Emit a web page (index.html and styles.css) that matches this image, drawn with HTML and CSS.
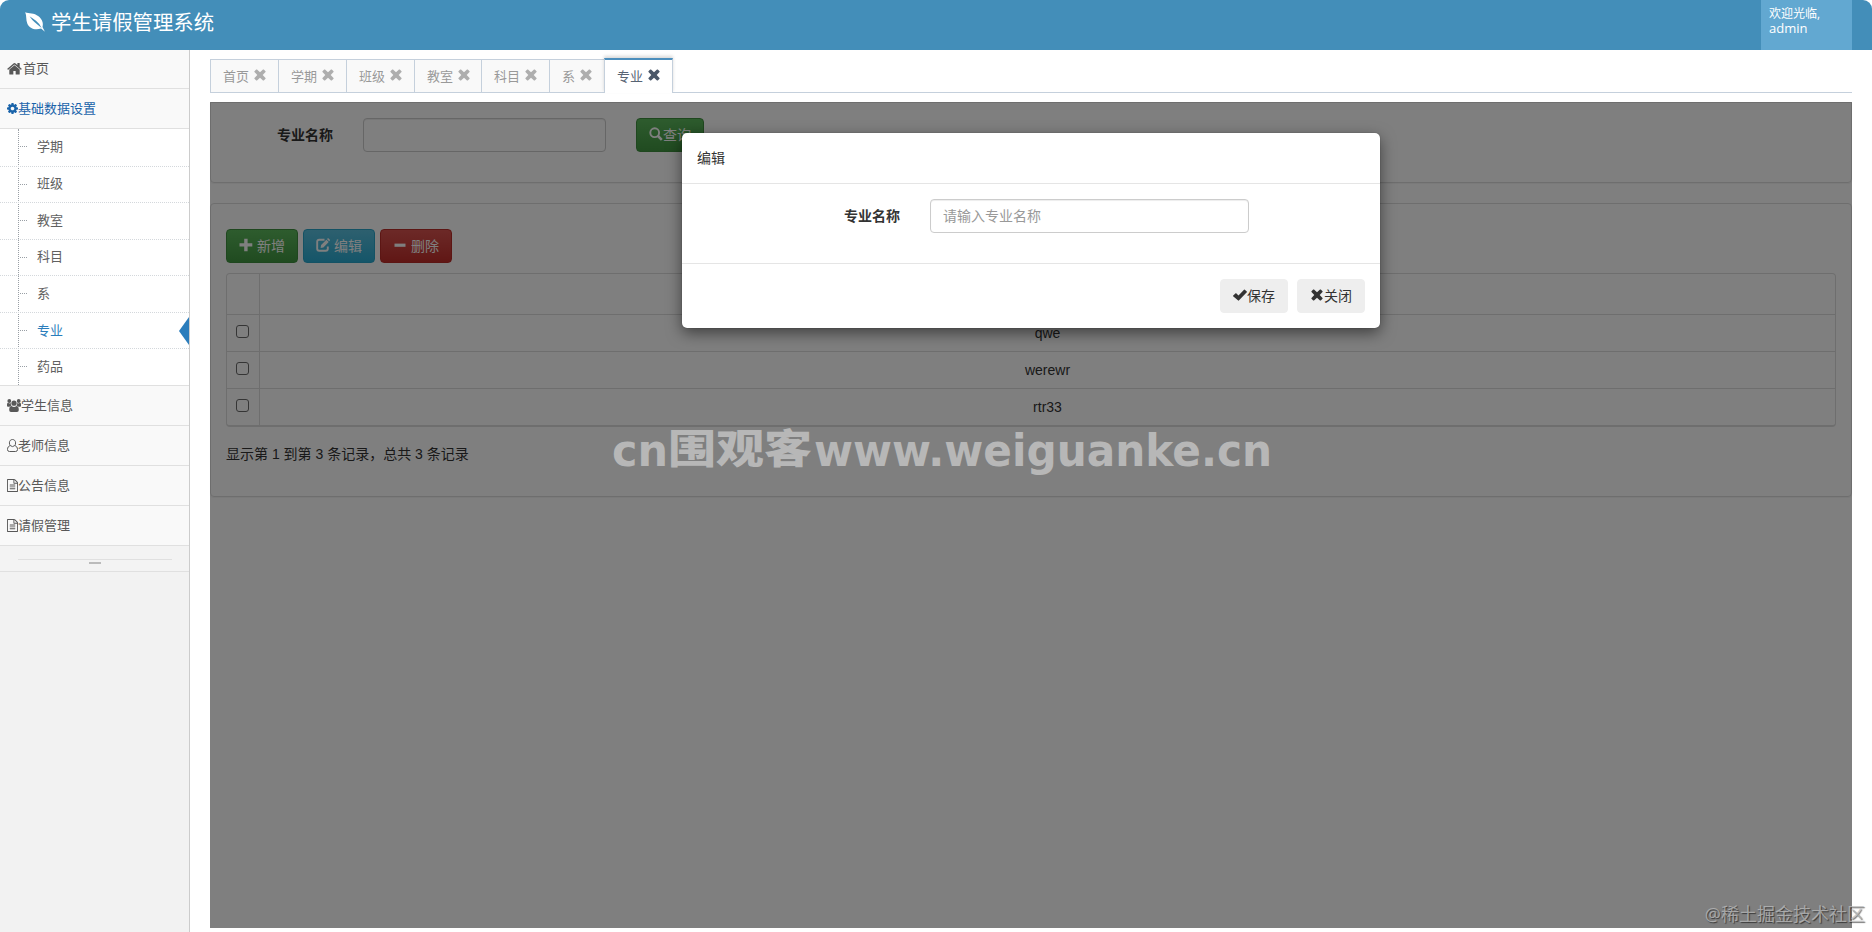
FILE: index.html
```html
<!DOCTYPE html>
<html lang="zh-CN">
<head>
    <meta charset="utf-8">
    <title>学生请假管理系统</title>
    <link rel="stylesheet" href="styles.css">
</head>
<body>
    <!-- icons -->
    <svg class="sprite">
        <symbol id="i-home" viewBox="64 192 1664 1344"><path d="M1472 992v480q0 26-19 45t-45 19h-384v-384h-256v384h-384q-26 0-45-19t-19-45v-480q0-1 .5-3t.5-3l575-474 575 474q1 2 1 6zm223-69l-62 74q-8 9-21 11h-3q-13 0-21-7l-692-577-692 577q-12 8-24 7-13-2-21-11l-62-74q-8-10-7-23.5t11-21.5l719-599q32-26 76-26t76 26l244 204v-195q0-14 9-23t23-9h192q14 0 23 9t9 23v408l219 182q10 8 11 21.5t-7 23.5z"/></symbol>
        <symbol id="i-cog" viewBox="128 128 1536 1536"><path d="M1152 896q0-106-75-181t-181-75-181 75-75 181 75 181 181 75 181-75 75-181zm512-109v222q0 12-8 23t-20 13l-185 28q-19 54-39 91 35 50 107 138 10 12 10 25t-9 23q-27 37-99 108t-94 71q-12 0-26-9l-138-108q-44 23-91 38-16 136-29 186-7 28-36 28h-222q-14 0-24.5-8.5t-11.5-21.5l-28-184q-49-16-90-37l-141 107q-10 9-25 9-14 0-25-11-126-114-165-168-7-10-7-23 0-12 8-23 15-21 51-66.5t54-70.5q-27-50-41-99l-183-27q-13-2-21-12.5t-8-23.5v-222q0-12 8-23t19-13l186-28q14-46 39-92-40-57-107-138-10-12-10-24 0-10 9-23 26-36 98.5-107.5t94.5-71.5q13 0 26 10l138 107q44-23 91-38 16-136 29-186 7-28 36-28h222q14 0 24.5 8.5t11.5 21.5l28 184q49 16 90 37l142-107q9-9 24-9 13 0 25 10 129 119 165 170 7 8 7 22 0 12-8 23-15 21-51 66.5t-54 70.5q26 50 41 98l183 28q13 2 21 12.5t8 23.5z"/></symbol>
        <symbol id="i-file" viewBox="128 0 1536 1792"><path d="M1596 380q28 28 48 76t20 88v1152q0 40-28 68t-68 28h-1344q-40 0-68-28t-28-68v-1600q0-40 28-68t68-28h896q40 0 88 20t76 48zm-444-244v376h376q-10-29-22-41l-313-313q-12-12-41-22zm384 1528v-1024h-416q-40 0-68-28t-28-68v-416h-768v1536h1280zm-1024-864q0-14 9-23t23-9h704q14 0 23 9t9 23v64q0 14-9 23t-23 9h-704q-14 0-23-9t-9-23v-64zm736 224q14 0 23 9t9 23v64q0 14-9 23t-23 9h-704q-14 0-23-9t-9-23v-64q0-14 9-23t23-9h704zm0 256q14 0 23 9t9 23v64q0 14-9 23t-23 9h-704q-14 0-23-9t-9-23v-64q0-14 9-23t23-9h704z"/></symbol>
        <symbol id="i-group" viewBox="0 0 14 13"><circle cx="2.3" cy="2" r="1.9"/><circle cx="11.7" cy="2" r="1.9"/><path d="M0 7V5.4q0-1.6 1-1.6l1.5.6 1.3-.3q-.2 1.6.7 2.6-1.2 0-2 1H1Q0 7.700 0 7zM14 7V5.400q0-1.600-1-1.600l-1.500.600-1.300-.300q.2 1.600-.700 2.600 1.200 0 2 1H13q1 0 1-.700z"/><circle cx="7" cy="4.200" r="2.600"/><path d="M4.500 7.100q2.500 1.800 5 0 2.300 0 2.300 3.900 0 2-1.800 2H4q-1.800 0-1.800-2 0-3.900 2.300-3.900z"/></symbol>
        <symbol id="i-user" viewBox="0 0 11 13"><path d="M3.300 6.600q-.900-1-.900-2.700C2.400 1.800 3.700.5 5.500.5s3.100 1.300 3.100 3.400q0 1.700-.900 2.700M3.300 6.600C1.500 7 .5 8.500.5 10.500q0 2 1.900 2h6.200q1.900 0 1.900-2c0-2-1-3.500-2.800-3.900Q5.500 8.600 3.300 6.600z" fill="none" stroke="currentColor"/></symbol>
        <symbol id="i-leaf" viewBox="0 0 20 20"><path d="M.2.2C4 1.400 9 .8 13.500 4.200c4.200 3.300 5 7.600 4 10.800l2.400 4.800-3.800-3.200C10 18.200 4.500 16.800 2.300 11.500.8 7.700 1.800 4 .2.200z"/><path d="M4.500 4.200Q7 8 10 10.500T16.600 16Q14.500 11.500 11 8.800T4.500 4.200z" fill="#438eb9"/></symbol>
        <symbol id="i-remove" viewBox="0 0 12 12"><path d="M3 .6l3 2.700L9 .6q.4-.4.8 0l1.700 1.700q.4.4 0 .8L8.700 6l2.800 2.900q.4.400 0 .8l-1.700 1.700q-.4.400-.8 0L6 8.700l-3 2.700q-.4.400-.8 0L.5 9.700q-.4-.4 0-.8L3.300 6 .5 3.100q-.4-.4 0-.8L2.200.6q.4-.4.800 0z"/></symbol>
        <symbol id="i-ok" viewBox="0 0 14 12"><path d="M0 6.800l2.600-2.500q.3-.3.600 0l2.300 2.300L11 .7q.4-.4.800 0l2 1.800q.3.400 0 .7l-8 8.400q-.3.300-.6 0L.1 7.300q-.3-.3-.1-.5z"/></symbol>
        <symbol id="i-search" viewBox="0 0 14 14"><circle cx="5.700" cy="5.700" r="4.400" fill="none" stroke="currentColor" stroke-width="1.900"/><path d="M9 9l3.800 3.800" stroke="currentColor" stroke-width="2.500"/></symbol>
        <symbol id="i-plus" viewBox="0 0 14 14"><path d="M5.200.8h3.400v4.500h4.700v3.300H8.600v4.600H5.200V8.600H.5V5.300h4.700z"/></symbol>
        <symbol id="i-edit" viewBox="0 0 14 14"><path d="M8.500 1.700H3.200Q1.200 1.700 1.200 3.700v7q0 2 2 2h6.600q2 0 2-2V8.500" fill="none" stroke="currentColor" stroke-width="1.900"/><path d="M4.600 10l.5-3L10.400 1.700l2.300 2.300-5.300 5.400zM11 1.100l.8-.8q.3-.3.600 0l1.500 1.500q.3.300 0 .6l-.8.800z"/></symbol>
        <symbol id="i-minus" viewBox="0 0 14 14"><path d="M1.500 5.600h11v3.200h-11z"/></symbol>
    </svg>

    <div class="navbar">
        <div class="brand"><svg><use href="#i-leaf"/></svg><span>学生请假管理系统</span></div>
        <div class="user-info">欢迎光临,<br><span>admin</span></div>
    </div>

    <div class="main">
        <div class="sidebar">
            <ul class="nav-list">
                <li><a><svg class="home"><use href="#i-home"/></svg>首页</a></li>
                <li class="open"><a><svg class="cog"><use href="#i-cog"/></svg>基础数据设置</a>
                    <ul class="submenu">
                        <li>学期</li>
                        <li>班级</li>
                        <li>教室</li>
                        <li>科目</li>
                        <li>系</li>
                        <li class="active">专业</li>
                        <li>药品</li>
                    </ul>
                </li>
                <li><a><svg class="group"><use href="#i-group"/></svg>学生信息</a></li>
                <li><a><svg class="user"><use href="#i-user"/></svg>老师信息</a></li>
                <li><a><svg class="file"><use href="#i-file"/></svg>公告信息</a></li>
                <li><a><svg class="file"><use href="#i-file"/></svg>请假管理</a></li>
            </ul>
            <div class="sidebar-toggle"><i></i></div>
        </div>

        <div class="content">
            <div class="tabs">
                <div class="tab">首页<svg><use href="#i-remove"/></svg></div>
                <div class="tab">学期<svg><use href="#i-remove"/></svg></div>
                <div class="tab">班级<svg><use href="#i-remove"/></svg></div>
                <div class="tab">教室<svg><use href="#i-remove"/></svg></div>
                <div class="tab">科目<svg><use href="#i-remove"/></svg></div>
                <div class="tab">系<svg><use href="#i-remove"/></svg></div>
                <div class="tab active">专业<svg><use href="#i-remove"/></svg></div>
            </div>

            <div class="frame">
                <div class="panel search">
                    <label>专业名称</label>
                    <input type="text" class="form-control">
                    <button class="btn btn-success"><svg><use href="#i-search"/></svg>查询</button>
                </div>

                <div class="panel list">
                    <div class="toolbar">
                        <button class="btn btn-success"><svg><use href="#i-plus"/></svg> 新增</button>
                        <button class="btn btn-info"><svg><use href="#i-edit"/></svg> 编辑</button>
                        <button class="btn btn-danger"><svg><use href="#i-minus"/></svg> 删除</button>
                    </div>
                    <div class="table">
                        <div class="row head"><div class="check"></div><div class="cell"></div></div>
                        <div class="row"><div class="check"><i></i></div><div class="cell">qwe</div></div>
                        <div class="row"><div class="check"><i></i></div><div class="cell">werewr</div></div>
                        <div class="row"><div class="check"><i></i></div><div class="cell">rtr33</div></div>
                    </div>
                    <div class="page-info">显示第 1 到第 3 条记录，总共 3 条记录</div>
                </div>

                <div class="backdrop">
                    <div class="modal">
                        <div class="modal-header">编辑</div>
                        <div class="modal-body">
                            <label>专业名称</label>
                            <input type="text" class="form-control" placeholder="请输入专业名称">
                        </div>
                        <div class="modal-footer">
                            <button class="btn"><svg class="ok"><use href="#i-ok"/></svg>保存</button>
                            <button class="btn"><svg class="remove"><use href="#i-remove"/></svg>关闭</button>
                        </div>
                    </div>
                </div>
            </div>
        </div>
    </div>

    <svg class="site-mark" width="670" height="70">
        <text x="2" y="51" textLength="56" lengthAdjust="spacingAndGlyphs">cn</text>
        <text class="cjk" x="58" y="48" textLength="144" lengthAdjust="spacingAndGlyphs">围观客</text>
        <text x="204" y="51" textLength="458" lengthAdjust="spacingAndGlyphs">www.weiguanke.cn</text>
    </svg>
    <div class="corner-mark">@稀土掘金技术社区</div>
</body>
</html>
```

FILE: styles.css
```css
* {
    box-sizing: border-box;
}
body {
    margin: 0;
    height: 932px;
    overflow: hidden;
    position: relative;
    display: flex;
    flex-direction: column;
    background: #fff;
    font-family: "Open Sans", "Noto Sans CJK SC", sans-serif;
    font-size: 13px;
    color: #393939;
}
ul {
    list-style: none;
    margin: 0;
    padding: 0;
}
svg {
    fill: currentColor;
    flex: none;
}
.sprite {
    display: none;
}

/* top bar */
.navbar {
    height: 50px;
    flex: none;
    display: flex;
    justify-content: space-between;
    background: #438eb9;
    color: #fff;
    border-radius: 9px 9px 0 0;
}
.brand {
    display: flex;
    align-items: center;
    gap: 6px;
    height: 41px;
    padding-left: 25px;
    font-size: 20.4px;
}
.brand svg {
    width: 20px;
    height: 20px;
    margin-top: 3px;
}
.user-info {
    width: 91px;
    margin-right: 20px;
    padding: 6px 8px;
    background: #62a8d1;
    font-size: 12px;
    line-height: 15px;
}
.user-info span {
    font-size: 13px;
}

.main {
    flex: 1;
    display: flex;
    min-height: 0;
}

/* sidebar */
.sidebar {
    width: 190px;
    flex: none;
    background: #f2f2f2;
    border-right: 1px solid #ccc;
}
.nav-list > li > a {
    display: flex;
    align-items: center;
    height: 40px;
    padding: 0 0 2px 7px;
    background: #f9f9f9;
    border-bottom: 1px solid #e0e0e0;
    color: #585858;
}
.nav-list > li:first-child > a {
    height: 39px;
    padding-bottom: 4px;
}
.nav-list > li.open > a {
    color: #1963aa;
    padding-bottom: 3px;
}
.nav-list .home {
    width: 15px;
    height: 13px;
    margin: 3px 1px 0 0;
}
.nav-list .cog {
    width: 11px;
    height: 11px;
    margin-top: 2px;
}
.nav-list .group {
    width: 14px;
    height: 13px;
    margin-top: 1px;
}
.nav-list .user {
    width: 11px;
    height: 13px;
    margin-top: 1px;
}
.nav-list .file {
    width: 11px;
    height: 13px;
    margin-top: 1px;
}
.submenu {
    position: relative;
    height: 257px;
    display: grid;
    grid-template-rows: repeat(7, 1fr);
    background: #fff;
    border-bottom: 1px solid #e0e0e0;
}
.submenu:before {
    content: "";
    position: absolute;
    left: 18px;
    top: 0;
    bottom: 0;
    border-left: 1px dotted #999fa5;
}
.submenu li {
    position: relative;
    display: flex;
    align-items: center;
    padding: 0 0 3px 37px;
    color: #616161;
    border-top: 1px dotted #d4d8dc;
}
.submenu li:first-child {
    border-top: none;
}
.submenu li:before {
    content: "";
    position: absolute;
    left: 20px;
    top: 17px;
    width: 7px;
    border-top: 1px dotted #999fa5;
}
.submenu li.active {
    color: #2b7dbc;
}
.submenu li.active:after {
    content: "";
    position: absolute;
    right: 0;
    top: 4px;
    border: 14px solid transparent;
    border-left: none;
    border-right: 10px solid #2b7dbc;
}
.sidebar-toggle {
    height: 26px;
    padding: 13px 17px 0 18px;
    background: #f3f3f3;
    border-bottom: 1px solid #e0e0e0;
}
.sidebar-toggle i {
    display: block;
    height: 6px;
    border-top: 1px solid #e0e0e0;
}
.sidebar-toggle i:after {
    content: "";
    display: block;
    width: 12px;
    height: 2px;
    margin: 2px auto 0;
    background: #bbb;
}

/* tabs */
.content {
    flex: 1;
    padding: 8px 20px 4px;
    display: flex;
    flex-direction: column;
}
.tabs {
    display: flex;
    height: 35px;
    flex: none;
    border-bottom: 1px solid #c5d0dc;
}
.tab {
    display: flex;
    align-items: center;
    gap: 5px;
    margin-top: 1px;
    padding: 0 0 2px 12px;
    border: 1px solid #c5d0dc;
    border-width: 1px 0 0 1px;
    background: #f9f9f9;
    color: #999;
    white-space: nowrap;
    width: 68px;
}
.tab:nth-child(4) {
    width: 67px;
}
.tab:nth-child(6) {
    width: 55px;
}
.tab svg {
    width: 12px;
    height: 12px;
    color: #aeaeae;
}
.tab.active {
    width: 69px;
    margin: 0 0 -1px;
    padding-bottom: 3px;
    border-width: 2px 1px 0;
    border-top-color: #4c8fbd;
    background: #fff;
    color: #576373;
    box-shadow: 0 -2px 3px rgba(0,0,0,0.15);
    z-index: 1;
}
.tab.active svg {
    color: #4a5768;
}

/* page in the active tab */
.frame {
    flex: 1;
    position: relative;
    margin-top: 9px;
    font-family: "Liberation Sans", "Noto Sans CJK SC", sans-serif;
    font-size: 14px;
    color: #333;
}
.panel {
    border: 1px solid #ddd;
    border-radius: 4px;
    box-shadow: 0 1px 1px rgba(0,0,0,0.05);
}
.search {
    height: 81px;
    display: flex;
    align-items: flex-start;
    padding: 15px 0 0 66px;
    border-top-left-radius: 0;
    border-top-right-radius: 0;
}
label {
    font-weight: bold;
    line-height: 34px;
    width: 86px;
}
.form-control {
    height: 34px;
    width: 243px;
    padding: 6px 12px;
    border: 1px solid #ccc;
    border-radius: 4px;
    font: inherit;
    background: #fff;
    box-shadow: inset 0 1px 1px rgba(0,0,0,0.075);
}
.form-control::placeholder {
    color: #999;
}
.search .btn {
    margin-left: 30px;
}
.list {
    height: 294px;
    margin-top: 20px;
    padding: 25px 15px 0;
}
.btn {
    height: 34px;
    padding: 0 12px 2px;
    display: flex;
    align-items: center;
    border: 1px solid #eee;
    border-radius: 4px;
    background: #eee;
    color: #333;
    font: inherit;
    white-space: pre;
}
.btn svg {
    width: 14px;
    height: 14px;
}
.btn-success {
    color: #fff;
    background: linear-gradient(#5cb85c, #419641);
    border-color: #3e8f3e;
}
.btn-info {
    color: #fff;
    background: linear-gradient(#5bc0de, #2aabd2);
    border-color: #28a4c9;
}
.btn-danger {
    color: #fff;
    background: linear-gradient(#d9534f, #c12e2a);
    border-color: #b92c28;
}
.toolbar {
    display: flex;
    gap: 5px;
}
.toolbar .btn {
    width: 72px;
}
.table {
    height: 154px;
    margin-top: 10px;
    display: flex;
    flex-direction: column;
    border: 1px solid #ddd;
    border-bottom-width: 2px;
    border-radius: 4px;
}
.row {
    height: 37px;
    display: flex;
    border-top: 1px solid #ddd;
}
.row.head {
    height: 40px;
    border-top: none;
}
.check {
    width: 33px;
    border-right: 1px solid #ddd;
    padding: 10px 0 0 9px;
}
.check i {
    display: block;
    width: 13px;
    height: 13px;
    border: 1px solid #6b6b6b;
    border-radius: 3px;
}
.cell {
    flex: 1;
    text-align: center;
    line-height: 36px;
}
.page-info {
    margin-top: 17px;
    line-height: 20px;
}

/* modal */
.backdrop {
    position: absolute;
    inset: 0;
    background: rgba(0,0,0,0.5);
}
.modal {
    width: 698px;
    height: 195px;
    margin: 31px auto 0;
    background: #fff;
    border-radius: 5px;
    box-shadow: 0 0 1px rgba(0,0,0,0.5), 0 5px 15px rgba(0,0,0,0.5);
}
.modal-header {
    height: 51px;
    padding: 15px;
    line-height: 20px;
    border-bottom: 1px solid #e5e5e5;
}
.modal-body {
    display: flex;
    height: 79px;
    padding: 15px 0 0 162px;
}
.modal-body .form-control {
    width: 319px;
}
.modal-footer {
    display: flex;
    justify-content: flex-end;
    gap: 9px;
    padding: 15px;
    border-top: 1px solid #e5e5e5;
}
.modal-footer .btn {
    width: 68px;
    white-space: nowrap;
}
.modal-footer .ok {
    height: 12px;
}
.modal-footer .remove {
    height: 12px;
    width: 14px;
}

/* watermarks */
.site-mark {
    position: absolute;
    left: 610px;
    top: 415px;
    fill: #b7b7b7;
    font: bold 44px "DejaVu Sans", sans-serif;
}
.site-mark .cjk {
    font: 900 40px "Noto Sans CJK SC", sans-serif;
}
.corner-mark {
    position: absolute;
    right: 7px;
    bottom: 5px;
    font-size: 18px;
    line-height: 26px;
    color: rgba(190,190,190,0.75);
    text-shadow: 1px 1px 1px rgba(0,0,0,0.55);
}
```
